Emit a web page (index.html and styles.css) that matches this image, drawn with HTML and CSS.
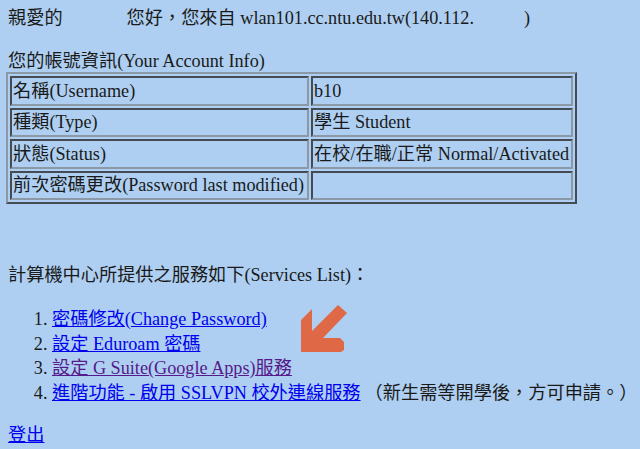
FILE: index.html
```html
<!DOCTYPE html>
<html lang="zh-Hant">

<head>
  <meta charset="UTF-8">
  <meta name="viewport" content="width=device-width, initial-scale=1.0">
  <title>計算機中心 帳號服務</title>

  <link rel="stylesheet" href="styles.css">
</head>

<body>
  <p class="greeting">親愛的<span class="masked name-mask"></span>您好，您來自 wlan101.cc.ntu.edu.tw(140.112.<span class="masked ip-mask"></span>)</p>

  <p class="info-title">您的帳號資訊(Your Account Info)</p>
  <table class="account">
    <tr>
      <td class="label">名稱(Username)</td>
      <td class="value">b10</td>
    </tr>
    <tr>
      <td class="label">種類(Type)</td>
      <td class="value">學生 Student</td>
    </tr>
    <tr>
      <td class="label">狀態(Status)</td>
      <td class="value">在校/在職/正常 Normal/Activated</td>
    </tr>
    <tr>
      <td class="label">前次密碼更改(Password last modified)</td>
      <td class="value"></td>
    </tr>
  </table>

  <p class="services-title">計算機中心所提供之服務如下(Services List)：</p>
  <ol class="services">
    <li><a href="#">密碼修改(Change Password)</a></li>
    <li><a href="#">設定 Eduroam 密碼</a></li>
    <li><a href="#" class="visited">設定 G Suite(Google Apps)服務</a></li>
    <li><a href="#">進階功能 - 啟用 SSLVPN 校外連線服務</a><span class="note">（新生需等開學後，方可申請。）</span></li>
  </ol>

  <!-- pointer next to the G Suite item -->
  <svg class="pointer" width="50" height="50" viewBox="0 0 50 50">
    <polygon points="1,48 1,16 12,5 12,27 38,1 47,9 23,34 40,34 44,38 44,46 41,48" fill="#df6947"/>
  </svg>

  <p class="logout"><a href="#">登出</a></p>
</body>

</html>
```

FILE: styles.css
```css
body {
  margin: 0;
  padding: 6px 8px;
  position: relative;
  background-color: #aecff1;
  color: #1a1a1a;
  font-family: "Liberation Serif", "Noto Sans CJK TC", serif;
  font-size: 18.2px;
}

p {
  margin: 0;
  white-space: nowrap;
}

a {
  color: #0000ee;
}

a.visited {
  color: #551a8b;
}

.greeting {
  line-height: 24px;
}

.masked {
  display: inline-block;
}

.name-mask {
  width: 64px;
}

.ip-mask {
  width: 50px;
}

.info-title {
  margin-top: 20px;
  line-height: 22px;
}

.account {
  margin-left: -2px;
  border: 2px outset #8b98a6;
  border-spacing: 2px;
}

.account td {
  height: 29.5px;
  padding: 0 1px;
  border: 2px inset #8b98a6;
  line-height: 24px;
  white-space: nowrap;
  box-sizing: border-box;
  vertical-align: middle;
}

.account .label {
  width: 299px;
}

.account .value {
  width: 262px;
}

.services-title {
  margin-top: 59px;
  line-height: 24px;
}

.services {
  margin: 20px 0 0;
  padding-left: 44px;
}

.services li {
  line-height: 24.7px;
  white-space: nowrap;
}

.note {
  margin-left: 4px;
}

.pointer {
  position: absolute;
  left: 300px;
  top: 304px;
}

.logout {
  margin-top: 17px;
  line-height: 24px;
}
```
